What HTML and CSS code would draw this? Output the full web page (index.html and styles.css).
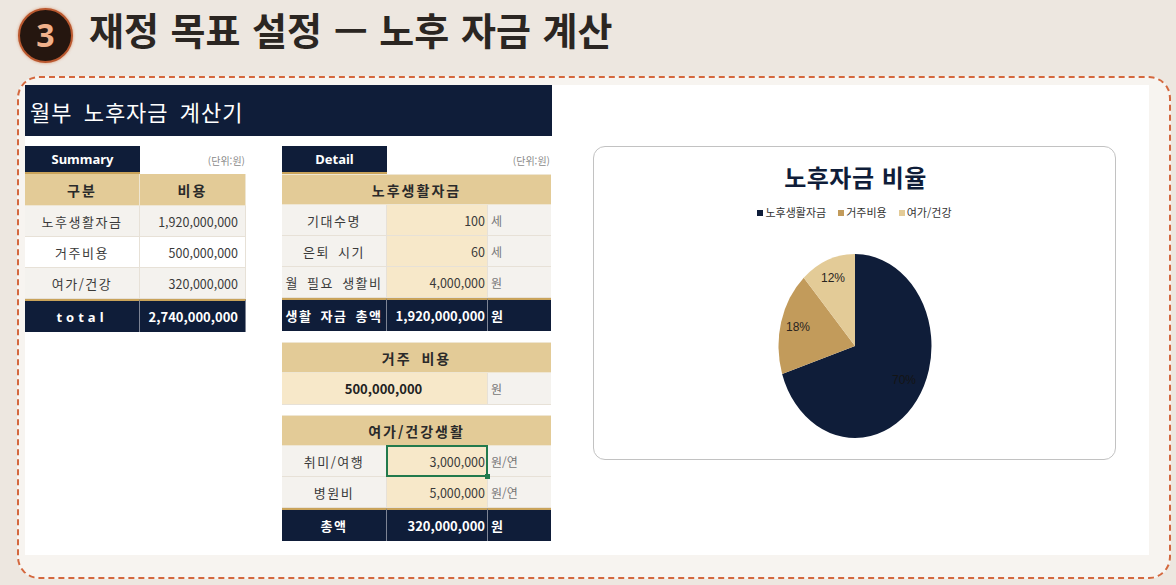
FILE: index.html
```html
<!DOCTYPE html>
<html lang="ko">
<head>
<meta charset="utf-8">
<title>재정 목표 설정 — 노후 자금 계산</title>
<link rel="stylesheet" href="styles.css">
</head>
<body>
<header class="page-head">
  <div class="step">3</div>
  <h1>재정 목표 설정 — 노후 자금 계산</h1>
</header>
<section class="panel">
  <div class="sheet">
    <div class="left">
      <div class="sheet-title">월부 노후자금 계산기</div>
      <div class="tables">
        <div class="summary">
          <div class="tab">Summary</div>
          <div class="note">(단위:원)</div>
          <div class="th">구분</div>
          <div class="th">비용</div>
          <div class="td lbl alt">노후생활자금</div>
          <div class="td num alt">1,920,000,000</div>
          <div class="td lbl">거주비용</div>
          <div class="td num">500,000,000</div>
          <div class="td lbl alt">여가/건강</div>
          <div class="td num alt">320,000,000</div>
          <div class="tot lbl spaced">total</div>
          <div class="tot num">2,740,000,000</div>
        </div>
        <div class="detail">
          <div class="grid3">
            <div class="tab">Detail</div>
            <div class="note span2">(단위:원)</div>
            <div class="sec span3">노후생활자금</div>
            <div class="td lbl alt">기대수명</div>
            <div class="td num val">100</div>
            <div class="td unit alt">세</div>
            <div class="td lbl alt">은퇴 시기</div>
            <div class="td num val">60</div>
            <div class="td unit alt">세</div>
            <div class="td lbl alt">월 필요 생활비</div>
            <div class="td num val">4,000,000</div>
            <div class="td unit alt">원</div>
            <div class="tot lbl">생활 자금 총액</div>
            <div class="tot num">1,920,000,000</div>
            <div class="tot unit">원</div>
          </div>
          <div class="grid3 block">
            <div class="sec span3">거주 비용</div>
            <div class="td val span2 center bold">500,000,000</div>
            <div class="td unit alt">원</div>
          </div>
          <div class="grid3 block2">
            <div class="sec span3">여가/건강생활</div>
            <div class="td lbl alt">취미/여행</div>
            <div class="td num val sel">3,000,000</div>
            <div class="td unit alt">원/연</div>
            <div class="td lbl alt">병원비</div>
            <div class="td num val">5,000,000</div>
            <div class="td unit alt">원/연</div>
            <div class="tot lbl">총액</div>
            <div class="tot num">320,000,000</div>
            <div class="tot unit">원</div>
          </div>
        </div>
      </div>
    </div>
    <div class="chart">
      <div class="chart-title">노후자금 비율</div>
      <div class="legend">
        <span class="lg"><i class="sw navy"></i>노후생활자금</span>
        <span class="lg"><i class="sw tan"></i>거주비용</span>
        <span class="lg"><i class="sw light"></i>여가/건강</span>
      </div>
      <svg class="pie" width="156" height="188" viewBox="0 0 156 188">
        <path d="M78,94 L78,2 A76.5,92 0 1,1 5.13,122.03 Z" fill="#0f1d39"/>
        <path d="M78,94 L5.13,122.03 A76.5,92 0 0,1 26.78,25.66 Z" fill="#c29b5b"/>
        <path d="M78,94 L26.78,25.66 A76.5,92 0 0,1 78,2 Z" fill="#e3cb97"/>
        <text x="56" y="30" class="pl">12%</text>
        <text x="21" y="79" class="pl">18%</text>
        <text x="127" y="132" class="pl dark">70%</text>
      </svg>
    </div>
  </div>
</section>
</body>
</html>
```

FILE: styles.css
```css
html, body {
  margin: 0;
  padding: 0;
}
body {
  width: 1176px;
  height: 585px;
  overflow: hidden;
  background: #ede7e0;
  font-family: "Noto Sans CJK KR", "Noto Sans", sans-serif;
  color: #333;
}
.page-head {
  display: flex;
  align-items: center;
  height: 70px;
  padding-left: 18px;
  box-sizing: border-box;
}
.step {
  width: 51px;
  height: 51px;
  border-radius: 50%;
  background: #25160f;
  border: 2px solid #b9582f;
  box-shadow: 0 0 3px rgba(208, 112, 64, 0.7);
  color: #f0b08a;
  font-family: "Noto Sans", sans-serif;
  font-weight: 700;
  font-size: 32px;
  display: flex;
  align-items: center;
  justify-content: center;
  line-height: 1;
}
.page-head h1 {
  margin: 0 0 12px 16px;
  font-size: 38px;
  line-height: 1;
  font-weight: 700;
  color: #2b2622;
  word-spacing: 1px;
}
.panel {
  margin: 6px 5px 0 17px;
  height: 503px;
  box-sizing: border-box;
  border: 2px dashed #d4683e;
  border-radius: 22px;
  background: #f7f4f0;
  padding: 7px 20px 22px 6px;
}
.sheet {
  background: #fff;
  height: 100%;
  display: flex;
  align-items: flex-start;
}
.left {
  width: 527px;
}
.sheet-title {
  background: #0f1d39;
  height: 51px;
  color: #fff;
  font-size: 22px;
  display: flex;
  align-items: center;
  padding-left: 5px;
  letter-spacing: 1px;
  word-spacing: 4px;
}
.tables {
  display: flex;
  align-items: flex-start;
  gap: 36px;
  margin-top: 10px;
}
.summary {
  width: 221px;
  display: grid;
  grid-template-columns: 115px 106px;
  align-content: start;
}
.detail {
  width: 269px;
}
.grid3 {
  display: grid;
  grid-template-columns: 105px 101px 63px;
  align-content: start;
}
.block { margin-top: 11px; }
.block2 { margin-top: 10px; }
.span2 { grid-column: span 2; }
.span3 { grid-column: span 3; }

.tab {
  background: #0f1d39;
  color: #fff;
  font-family: "Noto Sans", sans-serif;
  font-weight: 700;
  font-size: 13px;
  height: 28px;
  box-sizing: border-box;
  border-bottom: 2px solid #c9a35a;
  display: flex;
  align-items: center;
  justify-content: center;
}
.note {
  font-size: 10px;
  color: #8a8a8a;
  display: flex;
  align-items: center;
  justify-content: flex-end;
  padding-right: 1px;
}
.th, .sec {
  background: #e3cb97;
  height: 32px;
  box-sizing: border-box;
  font-weight: 700;
  font-size: 14px;
  color: #2a2a2a;
  letter-spacing: 2px;
  word-spacing: 4px;
  display: flex;
  align-items: center;
  justify-content: center;
  border-bottom: 1px solid #efe6d2;
}
.th { border-right: 1px solid #efe6d2; }
.sec { height: 31px; border-top: 1px solid #efe6d2; }
.td {
  height: 31px;
  box-sizing: border-box;
  border-bottom: 1px solid #e7e1d7;
  border-right: 1px solid #e7e1d7;
  font-size: 13px;
  color: #3a3a3a;
  display: flex;
  align-items: center;
}
.block .td { height: 32px; }
.lbl {
  justify-content: center;
  letter-spacing: 1.5px;
  word-spacing: 3px;
}
.num {
  justify-content: flex-end;
  padding-right: 7px;
  font-size: 12.5px;
}
.val {
  background: #f7e8c9;
  padding-right: 2px;
}
.center { justify-content: center; }
.bold { font-weight: 700; font-size: 13px; color: #222; }
.unit {
  padding-left: 3px;
  color: #777;
  font-size: 12px;
  border-right: none;
}
.alt { background: #f4f2ee; }
.tot {
  background: #0f1d39;
  color: #fff;
  font-weight: 700;
  height: 33px;
  box-sizing: border-box;
  border-top: 2px solid #c9a35a;
  border-right: 1px solid #7d8494;
  display: flex;
  align-items: center;
  font-size: 13px;
}
.tot.num { padding-right: 7px; font-size: 13px; }
.grid3 .tot.num { padding-right: 2px; }
.tot.unit { color: #fff; border-right: none; }
.spaced { letter-spacing: 4px; font-family: "Noto Sans", sans-serif; }
.sel { position: relative; }
.sel::after {
  content: "";
  position: absolute;
  left: -1px;
  top: -1px;
  right: -1px;
  bottom: -1px;
  border: 2px solid #227a4c;
}
.sel::before {
  content: "";
  position: absolute;
  right: -3px;
  bottom: -3px;
  width: 5px;
  height: 5px;
  background: #227a4c;
  z-index: 1;
}

.chart {
  margin-left: 41px;
  margin-top: 61px;
  width: 523px;
  height: 314px;
  box-sizing: border-box;
  border: 1.5px solid #c2c2c2;
  border-radius: 12px;
  display: flex;
  flex-direction: column;
  align-items: center;
}
.chart-title {
  margin-top: 18px;
  font-size: 24px;
  line-height: 1;
  font-weight: 700;
  color: #0f1d39;
  letter-spacing: 0.5px;
  padding-left: 2px;
}
.legend {
  margin-top: 17px;
  display: flex;
  gap: 12px;
  font-size: 11px;
  line-height: 13px;
  color: #333;
}
.lg {
  display: flex;
  align-items: center;
  gap: 2px;
}
.sw {
  width: 6px;
  height: 6px;
  display: inline-block;
}
.sw.navy { background: #0f1d39; }
.sw.tan { background: #c29b5b; }
.sw.light { background: #e3cb97; }
.pie {
  margin-top: 33px;
}
.pl {
  font-family: "Liberation Sans", sans-serif;
  font-size: 12px;
  fill: #2a2520;
  text-anchor: middle;
}
.pl.dark { fill: #141414; }
```
